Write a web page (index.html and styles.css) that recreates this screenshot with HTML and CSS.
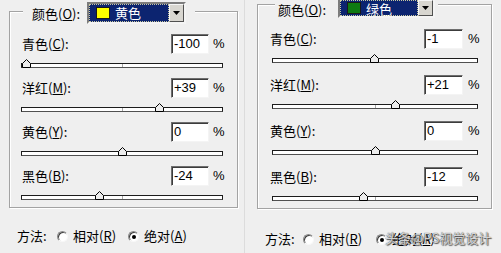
FILE: index.html
```html
<!DOCTYPE html>
<html lang="zh-CN">
<head>
    <meta charset="UTF-8">
    <title>可选颜色</title>
    <link rel="stylesheet" href="styles.css">
</head>
<body>
    <div class="screen">
        <!-- 黄色 -->
        <div class="pane pane-left">
            <div class="group">
                <div class="group-head">
                    <span class="head-label">颜色(<u>O</u>):</span>
                    <div class="select">
                        <div class="select-focus">
                            <span class="swatch swatch-yellow"></span>
                            <span class="select-text">黄色</span>
                        </div>
                        <span class="select-btn"><svg width="7" height="4" viewBox="0 0 7 4"><path d="M0 0h7L3.5 4z" fill="#000"/></svg></span>
                    </div>
                </div>

                <div class="channel">
                    <div class="channel-row">
                        <span class="label">青色(<u>C</u>):</span>
                        <span class="value">-100</span>
                        <span class="pct">%</span>
                    </div>
                    <div class="track"><span class="thumb" style="--p: 0"></span></div>
                </div>
                <div class="channel">
                    <div class="channel-row">
                        <span class="label">洋红(<u>M</u>):</span>
                        <span class="value">+39</span>
                        <span class="pct">%</span>
                    </div>
                    <div class="track"><span class="thumb" style="--p: 0.695"></span></div>
                </div>
                <div class="channel">
                    <div class="channel-row">
                        <span class="label">黄色(<u>Y</u>):</span>
                        <span class="value">0</span>
                        <span class="pct">%</span>
                    </div>
                    <div class="track"><span class="thumb" style="--p: 0.5"></span></div>
                </div>
                <div class="channel">
                    <div class="channel-row">
                        <span class="label">黑色(<u>B</u>):</span>
                        <span class="value">-24</span>
                        <span class="pct">%</span>
                    </div>
                    <div class="track"><span class="thumb" style="--p: 0.38"></span></div>
                </div>
            </div>

            <div class="method">
                <span class="method-label">方法:</span>
                <span class="radio"></span>
                <span class="radio-text">相对(<u>R</u>)</span>
                <span class="radio checked"></span>
                <span class="radio-text">绝对(<u>A</u>)</span>
            </div>
        </div>

        <!-- 绿色 -->
        <div class="pane pane-right">
            <div class="group">
                <div class="group-head">
                    <span class="head-label">颜色(<u>O</u>):</span>
                    <div class="select">
                        <div class="select-focus">
                            <span class="swatch swatch-green"></span>
                            <span class="select-text">绿色</span>
                        </div>
                        <span class="select-btn"><svg width="7" height="4" viewBox="0 0 7 4"><path d="M0 0h7L3.5 4z" fill="#000"/></svg></span>
                    </div>
                </div>

                <div class="channel">
                    <div class="channel-row">
                        <span class="label">青色(<u>C</u>):</span>
                        <span class="value">-1</span>
                        <span class="pct">%</span>
                    </div>
                    <div class="track"><span class="thumb" style="--p: 0.495"></span></div>
                </div>
                <div class="channel">
                    <div class="channel-row">
                        <span class="label">洋红(<u>M</u>):</span>
                        <span class="value">+21</span>
                        <span class="pct">%</span>
                    </div>
                    <div class="track"><span class="thumb" style="--p: 0.605"></span></div>
                </div>
                <div class="channel">
                    <div class="channel-row">
                        <span class="label">黄色(<u>Y</u>):</span>
                        <span class="value">0</span>
                        <span class="pct">%</span>
                    </div>
                    <div class="track"><span class="thumb" style="--p: 0.5"></span></div>
                </div>
                <div class="channel">
                    <div class="channel-row">
                        <span class="label">黑色(<u>B</u>):</span>
                        <span class="value">-12</span>
                        <span class="pct">%</span>
                    </div>
                    <div class="track"><span class="thumb" style="--p: 0.44"></span></div>
                </div>
            </div>

            <div class="method">
                <span class="method-label">方法:</span>
                <span class="radio"></span>
                <span class="radio-text">相对(<u>R</u>)</span>
                <span class="radio checked"></span>
                <span class="radio-text">绝对(<u>A</u>)</span>
                <span class="watermark">头条@PS视觉设计</span>
            </div>
        </div>
    </div>
</body>
</html>
```

FILE: styles.css
```css
* {
    margin: 0;
    padding: 0;
    box-sizing: border-box;
}

body {
    font-family: "Noto Sans CJK SC", sans-serif;
    font-size: 13px;
    line-height: 16px;
    color: #000;
    background-color: #efefef;
    overflow: hidden;
}

u {
    text-decoration: underline;
    text-underline-offset: 1px;
}

.screen {
    display: flex;
    width: 501px;
    height: 253px;
    overflow: hidden;
}

.pane {
    position: relative;
}

.pane-left {
    width: 245px;
    padding: 11px 0 0 9px;
    border-right: 1px solid #dcdcdc;
}

.pane-right {
    flex: 1;
    padding: 4px 0 0 12px;
}

/* group box */
.group {
    border: 1px solid #a3a3a3;
    box-shadow: inset 1px 1px 0 #fff, 1px 1px 0 #fff;
    padding-bottom: 7px;
}

.pane-left .group {
    width: 229px;
}

.pane-right .group {
    width: 235px;
}

.group-head {
    display: flex;
    align-items: center;
    background-color: #efefef;
    width: max-content;
}

.pane-left .group-head {
    margin: -10px 0 0 13px;
    padding: 0 9px;
}

.pane-right .group-head {
    margin: -7px 0 0 17px;
    padding: 0 3px;
}

.pane-left .head-label {
    width: 55px;
    padding-top: 2px;
}

.pane-right .head-label {
    width: 60px;
    padding-top: 4px;
}

/* dropdown */
.select {
    display: flex;
    height: 22px;
    border: 2px solid;
    border-color: #7c7c7c #f4f4f4 #f4f4f4 #7c7c7c;
    background-color: #fff;
}

.pane-left .select {
    width: 99px;
}

.pane-right .select {
    width: 97px;
    height: 20px;
}

.select-focus {
    flex: 1;
    display: flex;
    align-items: center;
    background-color: #0c2470;
    outline: 1px dotted #c8c8a0;
    outline-offset: -1px;
    padding-left: 7px;
}

.swatch {
    width: 14px;
    height: 12px;
    border: 1px solid #1a1a1a;
    margin-right: 5px;
}

.swatch-yellow {
    background-color: #ffff00;
}

.swatch-green {
    background-color: #0e7a12;
}

.select-text {
    color: #fff;
    line-height: 14px;
}

.pane-right .select-text {
    padding-top: 2px;
}

.select-btn {
    width: 15px;
    display: flex;
    align-items: center;
    justify-content: center;
    background-color: #d8d6d0;
    border: 1px solid;
    border-color: #f6f6f6 #505050 #505050 #f6f6f6;
}

/* channel rows */
.channel {
    margin-top: 10px;
}

.pane-right .channel {
    margin-top: 12px;
}

.pane-right .group-head + .channel {
    margin-top: 11px;
}

.channel-row {
    display: flex;
    align-items: center;
    height: 20px;
}

.pane-left .channel-row {
    padding: 0 12px 0 12px;
}

.pane-right .channel-row {
    padding: 0 11px 0 12px;
}

.label {
    flex: 1;
}

.value {
    height: 20px;
    border: 1px solid;
    border-color: #6e6e6e #f4f4f4 #f4f4f4 #6e6e6e;
    box-shadow: inset 1px 1px 0 #3c3c3c;
    background-color: #fff;
    font-family: "Liberation Sans", Arial, sans-serif;
    font-size: 13px;
    line-height: 18px;
    padding-left: 2px;
}

.pane-left .value {
    width: 38px;
}

.pane-right .value {
    width: 39px;
}

.pct {
    width: 12px;
    margin-left: 4px;
    font-family: "Liberation Sans", Arial, sans-serif;
    font-size: 13px;
}

.pane-right .pct {
    margin-left: 5px;
}

/* slider */
.track {
    position: relative;
    height: 5px;
    margin-top: 9px;
    border: 1px solid #1c1c1c;
    border-bottom-color: #505050;
    background-color: #fff;
}

.track::after {
    content: "";
    position: absolute;
    left: 50%;
    top: 0;
    width: 1px;
    height: 3px;
    background-color: #a8a8a8;
}

.pane-left .track {
    width: 202px;
    margin-left: 11px;
}

.pane-right .track {
    width: 206px;
    margin-left: 14px;
}

.thumb {
    position: absolute;
    z-index: 1;
    top: -5px;
    left: calc((100% - 9px) * var(--p));
    width: 9px;
    height: 9px;
    background: url("data:image/svg+xml,%3Csvg xmlns='http://www.w3.org/2000/svg' width='9' height='9'%3E%3Cpath d='M.5 8.5V4.5L4.5.5l4 4v4z' fill='%23ececec' stroke='%23000'/%3E%3C/svg%3E") no-repeat;
}

/* method row */
.method {
    display: flex;
    align-items: center;
    height: 16px;
    position: relative;
}

.pane-left .method {
    margin: 20px 0 0 8px;
}

.pane-right .method {
    margin: 22px 0 0 8px;
}

.pane-left .method-label {
    width: 40px;
}

.pane-right .method-label {
    width: 38px;
}

.radio {
    width: 11px;
    height: 11px;
    border-radius: 50%;
    border: 1px solid;
    border-color: #8a8a8a #f8f8f8 #f8f8f8 #8a8a8a;
    box-shadow: inset 1px 1px 0 #404040;
    background-color: #fff;
    margin-right: 5px;
    position: relative;
}

.radio.checked::after {
    content: "";
    position: absolute;
    left: 3px;
    top: 3px;
    width: 4px;
    height: 4px;
    border-radius: 50%;
    background-color: #000;
}

.pane-left .radio-text {
    margin-right: 12px;
}

.pane-right .radio-text {
    margin-right: 14px;
}

.watermark {
    position: absolute;
    left: 120px;
    top: -1px;
    font-size: 13px;
    color: rgba(240, 240, 240, 0.85);
    text-shadow: 0 0 1px #222, 1px 1px 1px #555;
    white-space: nowrap;
}
```
